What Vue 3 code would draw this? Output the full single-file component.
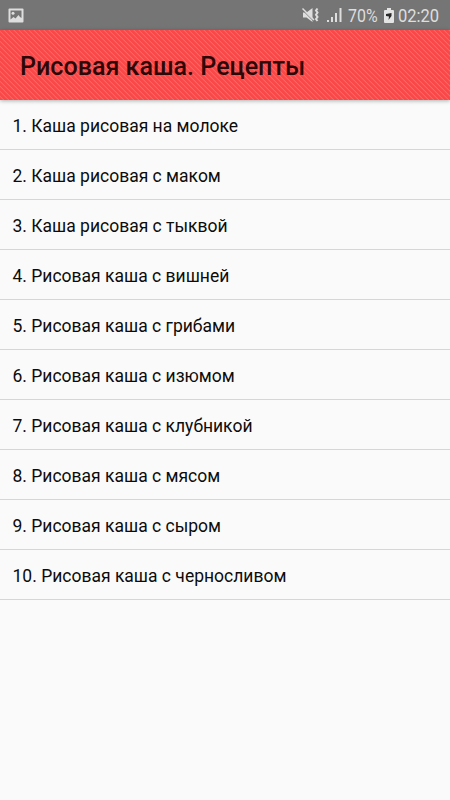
<script setup>
const recipes = [
  'Каша рисовая на молоке',
  'Каша рисовая с маком',
  'Каша рисовая с тыквой',
  'Рисовая каша с вишней',
  'Рисовая каша с грибами',
  'Рисовая каша с изюмом',
  'Рисовая каша с клубникой',
  'Рисовая каша с мясом',
  'Рисовая каша с сыром',
  'Рисовая каша с черносливом'
];
</script>

<template>
  <div class="screen">
    <div class="status-bar">
      <svg class="icon-picture" width="16" height="15" viewBox="0 0 16 15">
        <rect x="0.500" y="0.500" width="15" height="14" rx="1" fill="#dedede" />
        <path d="M2.500 2.500h11v7.500l-1.500-1-1.500-2-3 3.500-2-1.500-3 2.500z" fill="#757575" />
        <circle cx="5" cy="5.200" r="1.500" fill="#dedede" />
      </svg>
      <div class="status-right">
        <svg class="icon-mute" width="18" height="16" viewBox="0 0 18 16">
          <path d="M1 5.500h3.500L10.500 1v14L4.500 10.500H1z" fill="#dedede" />
          <path d="M0 2.500L12 14.500" stroke="#757575" stroke-width="1" />
          <path d="M0.500 1.500L12 13" stroke="#dedede" stroke-width="1.400" />
          <path d="M15.500 1.500l-1.500 2 1.500 2-1.500 2.300 1.500 2.200-1.500 2 1.500 2" fill="none" stroke="#dedede" stroke-width="2" />
        </svg>
        <svg class="icon-signal" width="15" height="14" viewBox="0 0 15 14">
          <path d="M0 12h2v2H0zM4 9h2v5H4zM8 5h2v9H8zM12.500 0h2v14h-2z" fill="#dedede" />
        </svg>
        <span class="battery-level"><span class="condensed">70%</span></span>
        <svg class="icon-battery" width="10" height="15" viewBox="0 0 10 15">
          <path d="M3 0h4v2h2q1 0 1 1v11q0 1-1 1H1q-1 0-1-1V3q0-1 1-1h2z" fill="#e4e4e4" />
          <path d="M2 6L7.500 5v3L4.500 12l.5-3.500L2 8z" fill="#292929" />
        </svg>
        <span class="clock"><span class="condensed">02:20</span></span>
      </div>
    </div>

    <header class="app-bar">
      <h1 class="title">Рисовая каша. Рецепты</h1>
    </header>

    <ul class="recipes">
      <li v-for="(recipe, index) in recipes" :key="recipe" class="recipe">
        {{ index + 1 }}. {{ recipe }}
      </li>
    </ul>
  </div>
</template>

<style>
body {
  margin: 0;
  background: #fafafa;
}
</style>

<style scoped>
.screen {
  min-height: 800px;
  background: #fafafa;
  font-family: Roboto, sans-serif;
  overflow: hidden;
}

.status-bar {
  display: flex;
  justify-content: space-between;
  align-items: center;
  height: 30px;
  box-sizing: border-box;
  padding: 0 10px 0 8px;
  background: #757575;
  color: #dedede;
}

.status-right {
  display: flex;
  align-items: center;
}

.icon-signal {
  margin-left: 7px;
}

.battery-level,
.clock {
  font-size: 19px;
  line-height: 31px;
  white-space: nowrap;
}

.battery-level {
  width: 30px;
  margin-left: 6px;
}

.clock {
  width: 42px;
  margin-left: 4px;
}

.icon-battery {
  margin-left: 6px;
}

.condensed {
  display: inline-block;
  transform: scaleX(0.84);
  transform-origin: left;
}

.clock .condensed {
  transform: scaleX(0.87);
}

.app-bar {
  display: flex;
  align-items: center;
  height: 70px;
  padding: 0 20px;
  background: repeating-linear-gradient(45deg, #fa4747 0, #fa4747 1.8px, #fe6866 2.7px, #fa4747 3.536px);
  box-shadow: 0 1px 4px rgba(0, 0, 0, 0.3);
}

.title {
  margin: 4px 0 0;
  font-size: 25.1px;
  font-weight: 500;
  line-height: 30px;
  color: #2c0808;
  white-space: nowrap;
}

.recipes {
  margin: 0;
  padding: 0;
  list-style: none;
}

.recipe {
  height: 50px;
  box-sizing: border-box;
  padding: 2px 12.5px 0;
  border-bottom: 1px solid #d6d6d6;
  font-size: 17.5px;
  line-height: 48px;
  color: #0c0c0c;
  white-space: nowrap;
}
</style>
